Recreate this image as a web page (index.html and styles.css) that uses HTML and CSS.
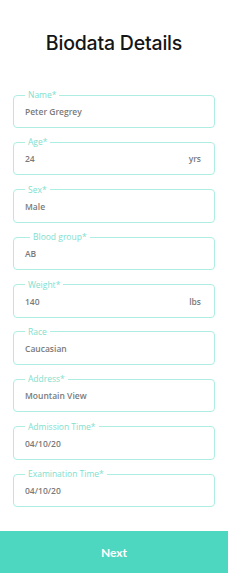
FILE: index.html
```html
<!DOCTYPE html>
<html lang="en">
  <head>
    <meta charset="UTF-8" />
    <meta name="viewport" content="width=device-width, initial-scale=1.0" />
    <title>Biodata Details</title>
    <link rel="stylesheet" href="styles.css">
  </head>
  <body>
    <div class="page">
      <h1 class="title">Biodata Details</h1>

      <form class="form">
        <fieldset class="field">
          <legend>Name*</legend>
          <div class="value">Peter Gregrey</div>
        </fieldset>
        <fieldset class="field">
          <legend>Age*</legend>
          <div class="value">24 <span class="unit">yrs</span></div>
        </fieldset>
        <fieldset class="field">
          <legend>Sex*</legend>
          <div class="value">Male</div>
        </fieldset>
        <fieldset class="field">
          <legend class="wide">Blood group*</legend>
          <div class="value">AB</div>
        </fieldset>
        <fieldset class="field">
          <legend>Weight*</legend>
          <div class="value">140 <span class="unit">lbs</span></div>
        </fieldset>
        <fieldset class="field">
          <legend>Race</legend>
          <div class="value">Caucasian</div>
        </fieldset>
        <fieldset class="field">
          <legend>Address*</legend>
          <div class="value">Mountain View</div>
        </fieldset>
        <fieldset class="field">
          <legend>Admission Time*</legend>
          <div class="value">04/10/20</div>
        </fieldset>
        <fieldset class="field">
          <legend>Examination Time*</legend>
          <div class="value">04/10/20</div>
        </fieldset>
      </form>

      <button class="next-button">Next</button>
    </div>
  </body>
</html>
```

FILE: styles.css
```css
body {
  margin: 0;
  padding: 0;
  background-color: white;
  font-family: 'Open Sans', 'Noto Sans', sans-serif;
}

.page {
  display: flex;
  flex-direction: column;
  min-height: 100vh;
}

.title {
  margin: 31px 0 0 0;
  text-align: center;
  font-family: Inter, 'Noto Sans', sans-serif;
  font-size: 19.5px;
  font-weight: 500;
  color: #151515;
  letter-spacing: -0.2px;
}

.form {
  display: flex;
  flex-direction: column;
  gap: 9.4px;
  padding: 0 13px;
  margin-top: 35px;
}

.field {
  margin: 0;
  padding: 6px 11px 9px 11px;
  border: 1px solid #aeeee2;
  border-radius: 4px;
  min-width: 0;
}

.field legend {
  padding: 0 3px;
  margin-left: 0;
  font-size: 8.5px;
  line-height: 10px;
  color: #7ee0ce;
}

.field legend.wide {
  margin-left: 5px;
}

.value {
  display: flex;
  justify-content: space-between;
  font-size: 8.5px;
  line-height: 12px;
  font-weight: 600;
  color: #7a7a7a;
}

.unit {
  padding-right: 2px;
}

.next-button {
  margin-top: auto;
  height: 42px;
  border: none;
  background-color: #4dd6c0;
  color: white;
  font-family: Lato, sans-serif;
  font-weight: 700;
  font-size: 12px;
  cursor: pointer;
}
```
